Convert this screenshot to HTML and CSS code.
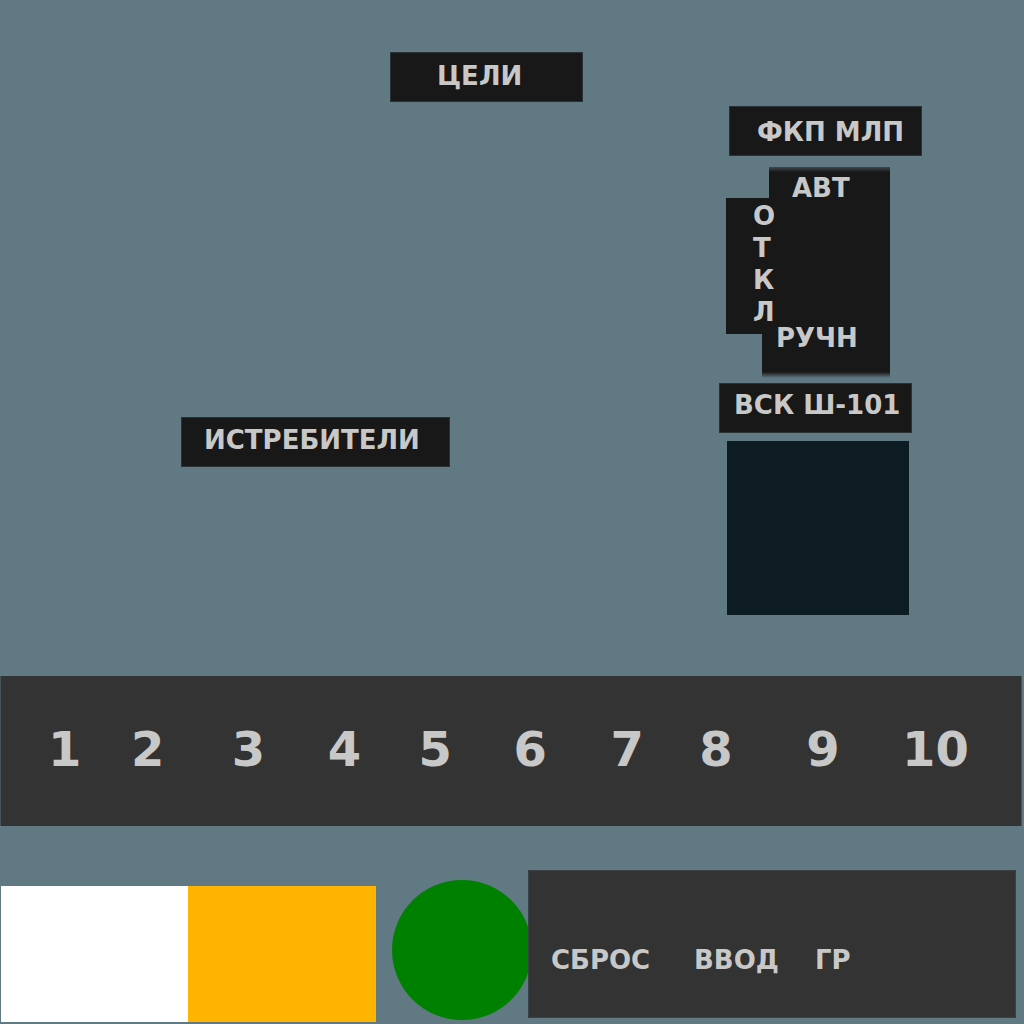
FILE: index.html
```html
<!DOCTYPE html>
<html lang="ru">
<head>
<meta charset="utf-8">
<meta name="viewport" content="width=device-width, initial-scale=1">
<title>Пульт</title>
<link rel="stylesheet" href="styles.css">
</head>
<body>
<main class="panel">
  <section class="board">
    <div class="plate targets">ЦЕЛИ</div>
    <div class="plate fighters">ИСТРЕБИТЕЛИ</div>
    <div class="side">
      <div class="plate camera">ФКП МЛП</div>
      <div class="selector">
        <div class="auto">АВТ</div>
        <div class="manual">РУЧН</div>
        <div class="off"><span>О</span><span>Т</span><span>К</span><span>Л</span></div>
      </div>
      <div class="plate control">ВСК Ш-101</div>
      <div class="screen"></div>
    </div>
  </section>
  <nav class="digits">
    <button type="button">1</button>
    <button type="button">2</button>
    <button type="button">3</button>
    <button type="button">4</button>
    <button type="button">5</button>
    <button type="button">6</button>
    <button type="button">7</button>
    <button type="button">8</button>
    <button type="button">9</button>
    <button type="button">10</button>
  </nav>
  <section class="bottom">
    <div class="lamp white"></div>
    <div class="lamp amber"></div>
    <div class="ready"></div>
    <div class="keys">
      <button type="button">СБРОС</button>
      <button type="button">ВВОД</button>
      <button type="button">ГР</button>
    </div>
  </section>
</main>
</body>
</html>
```

FILE: styles.css
```css
* {
  box-sizing: border-box;
}

body {
  margin: 0;
  background: #607982;
  color: #c8c8c8;
  font: bold 26px/32px "DejaVu Sans", sans-serif;
}

button {
  padding: 0;
  border: 0;
  background: none;
  color: inherit;
  font: inherit;
  text-align: left;
  cursor: pointer;
}

/* Upper board: name plates on the left, mode selector on the right */
.board {
  display: grid;
  grid-template-columns: 181fr 209fr 329fr 305fr;
  grid-template-rows: 52px 365px auto;
}

.plate {
  width: 193px;
  height: 50px;
  border: 1px solid #2b3235;
  background: #181818;
  white-space: nowrap;
}

.targets {
  grid-area: 2 / 3;
  padding: 7px 0 0 46px;
}

.fighters {
  grid-area: 3 / 2 / 4 / 4;
  width: 269px;
  padding: 6px 0 0 22px;
}

.side {
  grid-area: 1 / 4 / 4 / 5;
  padding-top: 106px;
}

.camera {
  margin-left: 10px;
  padding: 9px 0 0 27px;
}

.control {
  margin-top: 5px;
  padding: 5px 0 0 14px;
}

/* Stepped plate: each position overlaps its neighbour */
.selector {
  display: grid;
  grid-template-columns: 36px 7px 7px 114px;
  grid-template-rows: 31px 120px 16px 44px;
  margin: 11px 0 0 7px;
}

.auto {
  grid-area: 1 / 3 / 4 / 5;
  padding: 5px 0 0 23px;
  background: linear-gradient(#40494d, #181818 5px);
}

.manual {
  grid-area: 3 / 2 / 5 / 5;
  padding: 4px 0 0 14px;
  background: linear-gradient(to top, #607982, #181818 6px);
}

.off {
  grid-area: 2 / 1 / 4 / 4;
  display: flex;
  flex-direction: column;
  padding: 2px 0 0 27px;
  background: #181818;
}

.screen {
  width: 182px;
  height: 174px;
  margin: 8px 0 0 8px;
  background: #0d1c22;
}

.digits {
  display: grid;
  grid-template-columns: 83fr 101fr 96fr 91fr 95fr 97fr 89fr 107fr 96fr 119fr;
  height: 150px;
  margin: 61px 2px 0 0;
  padding: 45px 0 49px 47px;
  border: solid #46545a;
  border-width: 0 1px;
  background: #333333;
  font-size: 48px;
  line-height: 56px;
}

/* The round lamp is partly covered by the key block */
.bottom {
  display: grid;
  grid-template-columns: 187fr 188fr minmax(0, 152fr) 488fr;
  margin-top: 44px;
  padding: 0 8px 0 1px;
}

.lamp {
  height: 136px;
  margin-top: 16px;
}

.white {
  background: #ffffff;
}

.amber {
  background: #ffb400;
}

.ready {
  width: 140px;
  height: 140px;
  margin: 10px 0 0 16px;
  border-radius: 50%;
  background: #008000;
}

.keys {
  display: grid;
  grid-template-columns: 143fr 121fr 200fr;
  align-items: start;
  height: 148px;
  padding: 73px 0 0 22px;
  border: 1px solid #3b4144;
  background: #333333;
  z-index: 1;
}
```
